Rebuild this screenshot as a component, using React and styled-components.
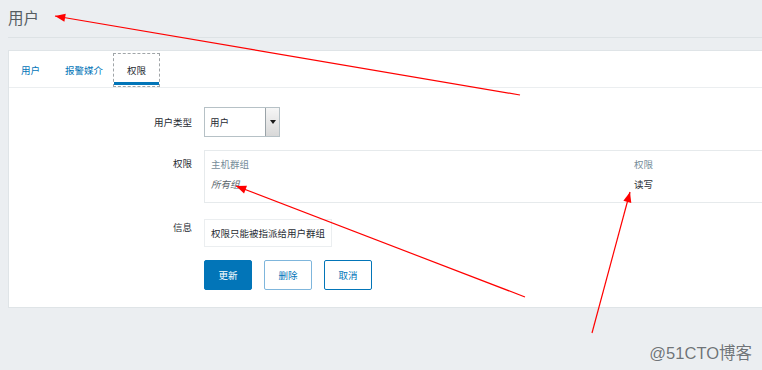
import React from 'react';
import styled, { createGlobalStyle } from 'styled-components';

const GlobalStyle = createGlobalStyle`
  html, body {
    margin: 0;
    padding: 0;
    background: #ebeef1;
  }
  body {
    font-family: "Noto Sans CJK SC", "Liberation Sans", sans-serif;
    font-size: 9.5px;
    color: #1f2c33;
  }
`;

const Page = styled.div`
  position: relative;
  width: 762px;
  height: 370px;
  overflow: hidden;
  padding-left: 8px;
  box-sizing: border-box;
`;

const Header = styled.header`
  height: 37px;
  border-bottom: 1px solid #dde2e5;
  display: flex;
  align-items: center;
  margin-bottom: 12px;
`;

const Title = styled.h1`
  margin: 0;
  font-size: 15.5px;
  font-weight: 400;
  color: #565d62;
  line-height: 1;
  padding-bottom: 2px;
`;

const Panel = styled.section`
  background: #fff;
  border: 1px solid #dfe4e7;
  border-right: none;
  height: 258px;
  box-sizing: border-box;
`;

const TabStrip = styled.ul`
  list-style: none;
  margin: 0;
  padding: 2px 0 0;
  display: flex;
  border-bottom: 1px solid #ebeef0;
  height: 37px;
  box-sizing: border-box;
`;

const Tab = styled.li`
  height: 34px;
  box-sizing: border-box;
  padding: 0 ${p => (p.$active ? 13 : 12)}px;
  margin-left: ${p => (p.$active ? -3 : 0)}px;
  display: flex;
  align-items: center;
  color: ${p => (p.$active ? '#1f2c33' : '#0275b8')};
  border: 1px dashed ${p => (p.$active ? '#a0a5a8' : 'transparent')};
  border-left-width: ${p => (p.$active ? '1px' : '0')};
  position: relative;
  &::after {
    content: '';
    display: ${p => (p.$active ? 'block' : 'none')};
    position: absolute;
    left: 0;
    right: 0;
    bottom: 1px;
    height: 3px;
    background: #0275b8;
  }
`;

const Form = styled.div`
  padding-top: 19px;
  display: flex;
  flex-direction: column;
`;

const Row = styled.div`
  display: flex;
  align-items: ${p => p.$align || 'flex-start'};
  margin-bottom: ${p => p.$mb || 0}px;
`;

const Label = styled.div`
  width: 195px;
  text-align: right;
  padding-right: 12px;
  padding-top: ${p => p.$pt || 0}px;
  box-sizing: border-box;
  flex-shrink: 0;
`;

const Select = styled.div`
  width: 76px;
  height: 30px;
  box-sizing: border-box;
  border: 1px solid #b6c1c6;
  display: flex;
  align-items: stretch;
  background: #fff;
`;

const SelectValue = styled.span`
  flex: 1;
  display: flex;
  align-items: center;
  padding-left: 5px;
`;

const SelectButton = styled.span`
  width: 13px;
  border-left: 1px solid #9aa3a8;
  background: linear-gradient(#f6f6f6, #d8d8d8);
  display: flex;
  align-items: center;
  justify-content: center;
  &::before {
    content: '';
    border-left: 3px solid transparent;
    border-right: 3px solid transparent;
    border-top: 4px solid #1a1a1a;
  }
`;

const PermBox = styled.div`
  flex: 1;
  height: 53px;
  box-sizing: border-box;
  border: 1px solid #e6eaec;
  border-right: none;
  display: grid;
  grid-template-columns: 423px 1fr;
  grid-template-rows: 21px 19px;
  padding: 2px 0 0 6px;
`;

const HeadCell = styled.div`
  color: #768d99;
  display: flex;
  align-items: center;
`;

const Cell = styled.div`
  display: flex;
  align-items: center;
  font-style: ${p => (p.$italic ? 'italic' : 'normal')};
  color: ${p => (p.$italic ? '#59656b' : '#1f2c33')};
`;

const InfoBox = styled.div`
  height: 28px;
  box-sizing: border-box;
  border: 1px solid #ebeef0;
  padding: 0 6px;
  display: flex;
  align-items: center;
`;

const Buttons = styled.div`
  display: flex;
  gap: 12px;
  margin-left: 195px;
`;

const Button = styled.button`
  width: 48px;
  height: 30px;
  box-sizing: border-box;
  border-radius: 2px;
  font-family: inherit;
  font-size: 9.5px;
  padding: 0;
  border: 1px solid ${p => p.$border || '#0275b8'};
  background: ${p => (p.$primary ? '#0275b8' : '#fff')};
  color: ${p => (p.$primary ? '#fff' : '#0275b8')};
`;

const Watermark = styled.div`
  position: absolute;
  right: 10px;
  bottom: 6px;
  font-family: "Liberation Sans", "Noto Sans CJK SC", sans-serif;
  font-size: 16.5px;
  color: #6f7478;
  text-shadow: 0 0 1px #fff;
`;

const Overlay = styled.svg`
  position: absolute;
  left: 0;
  top: 0;
  pointer-events: none;
`;

const arrows = [
  { x1: 520, y1: 95, x2: 55, y2: 16 },
  { x1: 525, y1: 297, x2: 236, y2: 186 },
  { x1: 592, y1: 333, x2: 630, y2: 192 },
];

const Arrow = ({ x1, y1, x2, y2 }) => {
  const a = Math.atan2(y1 - y2, x1 - x2);
  const len = 11;
  const w = 0.38;
  const p1 = [x2 + len * Math.cos(a - w), y2 + len * Math.sin(a - w)];
  const p2 = [x2 + len * Math.cos(a + w), y2 + len * Math.sin(a + w)];
  return (
    <g>
      <line x1={x1} y1={y1} x2={x2} y2={y2} stroke="#f00" strokeWidth="1.2" />
      <polygon points={`${x2},${y2} ${p1.join(',')} ${p2.join(',')}`} fill="#f00" />
    </g>
  );
};

export default function App() {
  return (
    <>
      <GlobalStyle />
      <Page>
        <Header>
          <Title>用户</Title>
        </Header>
        <Panel>
          <TabStrip>
            <Tab>用户</Tab>
            <Tab>报警媒介</Tab>
            <Tab $active>权限</Tab>
          </TabStrip>
          <Form>
            <Row $align="center" $mb={13}>
              <Label>用户类型</Label>
              <Select>
                <SelectValue>用户</SelectValue>
                <SelectButton />
              </Select>
            </Row>
            <Row $mb={16}>
              <Label $pt={6}>权限</Label>
              <PermBox>
                <HeadCell>主机群组</HeadCell>
                <HeadCell>权限</HeadCell>
                <Cell $italic>所有组</Cell>
                <Cell>读写</Cell>
              </PermBox>
            </Row>
            <Row $mb={13}>
              <Label $pt={1}>信息</Label>
              <InfoBox>权限只能被指派给用户群组</InfoBox>
            </Row>
            <Buttons>
              <Button $primary>更新</Button>
              <Button $border="#7fb6dc">删除</Button>
              <Button>取消</Button>
            </Buttons>
          </Form>
        </Panel>
        <Watermark>@51CTO博客</Watermark>
        <Overlay width="762" height="370" viewBox="0 0 762 370">
          {arrows.map((a, i) => (
            <Arrow key={i} {...a} />
          ))}
        </Overlay>
      </Page>
    </>
  );
}
